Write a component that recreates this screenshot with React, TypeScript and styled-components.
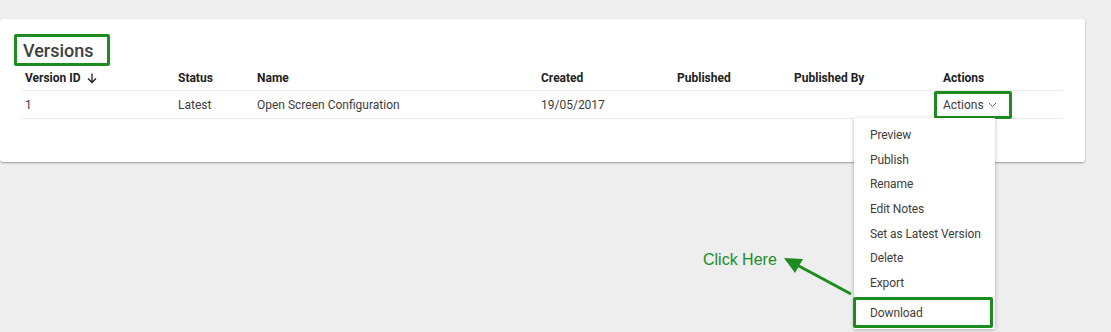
import * as React from "react";
import styled, { createGlobalStyle } from "styled-components";

const GlobalStyle = createGlobalStyle`
  html, body {
    margin: 0;
    padding: 0;
    background: #eeeeee;
    font-family: Roboto, "Liberation Sans", Arial, sans-serif;
  }
`;

const GREEN = "#1c8c1f";

type Version = {
  id: string;
  status: string;
  name: string;
  created: string;
  published: string;
  publishedBy: string;
};

const versions: Version[] = [
  {
    id: "1",
    status: "Latest",
    name: "Open Screen Configuration",
    created: "19/05/2017",
    published: "",
    publishedBy: "",
  },
];

const menuItems = [
  "Preview",
  "Publish",
  "Rename",
  "Edit Notes",
  "Set as Latest Version",
  "Delete",
  "Export",
];

export default function App() {
  return (
    <>
      <GlobalStyle />
      <Page>
        <Card>
          <TitleBox>
            <Title>Versions</Title>
          </TitleBox>
          <Table>
            <HeadCell>
              Version ID
              <SortArrow width="10" height="11" viewBox="0 0 10 11">
                <path d="M5 0.5v9M1 5.5l4 4 4-4" fill="none" stroke="#222" strokeWidth="1.3" />
              </SortArrow>
            </HeadCell>
            <HeadCell>Status</HeadCell>
            <HeadCell>Name</HeadCell>
            <HeadCell>Created</HeadCell>
            <HeadCell>Published</HeadCell>
            <HeadCell>Published By</HeadCell>
            <HeadCell>Actions</HeadCell>
            {versions.map((v) => (
              <React.Fragment key={v.id}>
                <Cell>{v.id}</Cell>
                <Cell>{v.status}</Cell>
                <Cell>{v.name}</Cell>
                <Cell>{v.created}</Cell>
                <Cell>{v.published}</Cell>
                <Cell>{v.publishedBy}</Cell>
                <ActionCell>
                  <ActionsButton>
                    Actions
                    <Chevron width="9" height="6" viewBox="0 0 9 6">
                      <path d="M1 1l3.5 3.5L8 1" fill="none" stroke="#666" strokeWidth="1" />
                    </Chevron>
                  </ActionsButton>
                  <Menu>
                    {menuItems.map((m) => (
                      <MenuItem key={m}>{m}</MenuItem>
                    ))}
                    <MenuItem $highlight>Download</MenuItem>
                  </Menu>
                </ActionCell>
              </React.Fragment>
            ))}
          </Table>
        </Card>
        <Callout>
          <CalloutText>Click Here</CalloutText>
          <svg width="80" height="50" viewBox="0 0 80 50">
            <line x1="72" y1="43" x2="18" y2="14" stroke={GREEN} strokeWidth="3" />
            <polygon points="5,7 24,8 16,22" fill={GREEN} />
          </svg>
        </Callout>
      </Page>
    </>
  );
}

const Page = styled.div`
  position: relative;
  width: 1111px;
  height: 332px;
  padding-top: 19px;
  box-sizing: border-box;
`;

const Card = styled.div`
  width: 1085px;
  height: 143px;
  background: #ffffff;
  border-radius: 3px;
  box-shadow: 0 1px 2px rgba(0, 0, 0, 0.35);
  padding: 15px 0 0 14px;
  box-sizing: border-box;
`;

const TitleBox = styled.div`
  width: 96px;
  height: 32px;
  border: 3px solid ${GREEN};
  border-radius: 2px;
  box-sizing: border-box;
  display: flex;
  align-items: center;
  padding-left: 6px;
`;

const Title = styled.h2`
  margin: 0;
  font-size: 18px;
  font-weight: 500;
  color: #404040;
`;

const Table = styled.div`
  display: grid;
  grid-template-columns: 153px 79px 284px 136px 117px 149px 122px;
  width: 1040px;
  margin-left: 8px;
`;

const HeadCell = styled.div`
  height: 24px;
  padding-left: 3px;
  display: flex;
  align-items: center;
  font-size: 12px;
  font-weight: 700;
  color: #222222;
  border-bottom: 1px solid #ececec;
`;

const SortArrow = styled.svg`
  margin-left: 6px;
`;

const Cell = styled.div`
  height: 27px;
  padding-left: 3px;
  display: flex;
  align-items: center;
  font-size: 12px;
  color: #3c3c3c;
  border-bottom: 1px solid #ececec;
`;

const ActionCell = styled(Cell)`
  position: relative;
`;

const ActionsButton = styled.div`
  margin-left: -9px;
  height: 28px;
  width: 78px;
  box-sizing: border-box;
  border: 3px solid ${GREEN};
  border-radius: 2px;
  padding-left: 6px;
  display: flex;
  align-items: center;
  gap: 4px;
  font-size: 12px;
  color: #3c3c3c;
`;

const Chevron = styled.svg`
  margin-top: 1px;
`;

const Menu = styled.div`
  position: absolute;
  left: -86px;
  top: 27px;
  width: 141px;
  padding: 5px 0 1px;
  background: #ffffff;
  box-shadow: 0 1px 4px rgba(0, 0, 0, 0.28);
  z-index: 2;
`;

const MenuItem = styled.div<{ $highlight?: boolean }>`
  height: ${(p) => (p.$highlight ? "31px" : "24.6px")};
  margin-top: ${(p) => (p.$highlight ? "2px" : "0")};
  margin-left: ${(p) => (p.$highlight ? "-1px" : "0")};
  width: ${(p) => (p.$highlight ? "140px" : "auto")};
  padding-left: ${(p) => (p.$highlight ? "14px" : "16px")};
  border: ${(p) => (p.$highlight ? `3px solid ${GREEN}` : "none")};
  border-radius: 2px;
  box-sizing: border-box;
  display: flex;
  align-items: center;
  font-size: 12px;
  letter-spacing: -0.1px;
  color: #404040;
`;

const Callout = styled.div`
  position: absolute;
  left: 703px;
  top: 251px;
  display: flex;
  align-items: flex-start;
`;

const CalloutText = styled.span`
  font-family: "Liberation Sans", Arial, sans-serif;
  font-size: 16px;
  color: ${GREEN};
  line-height: 18px;
  margin-right: 2px;
`;
